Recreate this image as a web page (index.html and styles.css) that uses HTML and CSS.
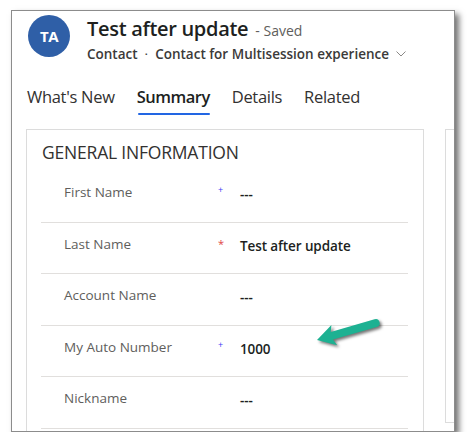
FILE: index.html
```html
<!DOCTYPE html>
<html>
<head>
<meta charset="utf-8">
<link rel="stylesheet" href="styles.css">
</head>
<body>
<div class="frame">
  <header class="header">
    <div class="avatar">TA</div>
    <div class="titles">
      <div class="title-line"><span class="title">Test after update</span><span class="saved">- Saved</span></div>
      <div class="sub-line"><span>Contact</span><span class="dot">·</span><span>Contact for Multisession experience</span>
        <svg class="chev" width="10" height="6" viewBox="0 0 10 6"><polyline points="0.5,0.5 5,5 9.5,0.5" fill="none" stroke="#8a8886" stroke-width="1"/></svg>
      </div>
    </div>
  </header>
  <nav class="tabs">
    <span class="tab">What's New</span>
    <span class="tab active">Summary</span>
    <span class="tab">Details</span>
    <span class="tab">Related</span>
  </nav>
  <div class="cards">
    <section class="card">
      <h2 class="card-title">GENERAL INFORMATION</h2>
      <div class="row"><span class="label">First Name</span><span class="mark rec">+</span><span class="value">---</span></div>
      <div class="row"><span class="label">Last Name</span><span class="mark req">*</span><span class="value">Test after update</span></div>
      <div class="row"><span class="label">Account Name</span><span class="mark"></span><span class="value">---</span></div>
      <div class="row"><span class="label">My Auto Number</span><span class="mark rec">+</span><span class="value">1000</span></div>
      <div class="row"><span class="label">Nickname</span><span class="mark"></span><span class="value">---</span></div>
    </section>
    <section class="card side"></section>
  </div>
  <svg class="arrow" width="90" height="60" viewBox="0 0 90 60">
    <g transform="translate(7,40) rotate(-16)">
      <path d="M0,0 L18,-10.5 L15.5,-4 L61,-4 A4,4 0 0 1 61,4 L15.5,4 L18,10.5 Z" fill="#1db192"/>
    </g>
  </svg>
</div>
</body>
</html>
```

FILE: styles.css
```css
html, body {
  margin: 0;
  padding: 0;
  background: #ffffff;
}
body {
  font-family: "Open Sans", "Noto Sans", sans-serif;
  color: #201f1e;
  overflow: hidden;
}
.frame {
  position: relative;
  margin: 10px 0 0 11px;
  width: 442px;
  height: 420px;
  border: 1px solid #8c8c8c;
  box-shadow: 4px 4px 6px rgba(0, 0, 0, 0.55);
  background: #fff;
  overflow: hidden;
}
.header {
  display: flex;
  align-items: flex-start;
  padding: 4px 0 0 16px;
}
.avatar {
  width: 42px;
  height: 42px;
  border-radius: 50%;
  background: #2f5fa7;
  color: #fff;
  font-weight: 700;
  font-size: 15px;
  letter-spacing: -0.5px;
  display: flex;
  align-items: center;
  justify-content: center;
  flex-shrink: 0;
}
.titles {
  margin-left: 17px;
  display: flex;
  flex-direction: column;
}
.title-line {
  display: flex;
  align-items: baseline;
  height: 28px;
}
.title {
  font-size: 20px;
  font-weight: 600;
  color: #201f1e;
  letter-spacing: -0.3px;
}
.saved {
  font-size: 14px;
  color: #605e5c;
  margin-left: 7px;
}
.sub-line {
  display: flex;
  align-items: center;
  font-size: 13.5px;
  font-weight: 600;
  color: #3b3a39;
  height: 21px;
}
.dot {
  margin: 0 7px;
  font-weight: 400;
}
.chev {
  margin-left: 7px;
}
.tabs {
  display: flex;
  gap: 22px;
  padding: 21px 0 0 15px;
  height: 42px;
  box-sizing: border-box;
}
.tab {
  font-size: 16.5px;
  color: #323130;
  letter-spacing: -0.3px;
  height: 23px;
  position: relative;
}
.tab.active {
  font-weight: 600;
  color: #201f1e;
  letter-spacing: -0.5px;
}
.tab.active::after {
  content: "";
  position: absolute;
  left: 1px;
  right: 0;
  bottom: -7px;
  height: 2.5px;
  background: #2266e3;
  border-radius: 1px;
}
.cards {
  display: flex;
  gap: 21px;
  padding: 23px 0 0 14px;
}
.card {
  width: 396px;
  height: 320px;
  flex-shrink: 0;
  border: 1px solid #dcdcdc;
  box-sizing: content-box;
}
.card.side {
  width: 40px;
  height: 292px;
}
.card-title {
  margin: 0;
  font-size: 17.5px;
  font-weight: 400;
  color: #323130;
  padding: 10px 0 0 15px;
  height: 31px;
  letter-spacing: -0.2px;
}
.row {
  display: flex;
  align-items: flex-start;
  margin: 0 15px 0 14px;
  height: 50.5px;
  border-bottom: 1px solid #e1dfdd;
}
.label {
  width: 154px;
  padding-left: 23px;
  padding-top: 12px;
  font-size: 13.5px;
  color: #605e5c;
}
.mark {
  width: 22px;
  padding-top: 13px;
  font-size: 11px;
}
.mark.rec {
  color: #3b3bf5;
  font-size: 9px;
  padding-top: 12px;
}
.mark.req {
  color: #e04545;
}
.value {
  padding-top: 14px;
  font-size: 13.5px;
  font-weight: 600;
  color: #201f1e;
  letter-spacing: -0.1px;
}
.arrow {
  position: absolute;
  left: 298px;
  top: 289px;
  filter: drop-shadow(2px 2px 1.5px rgba(0, 0, 0, 0.55));
}
```
